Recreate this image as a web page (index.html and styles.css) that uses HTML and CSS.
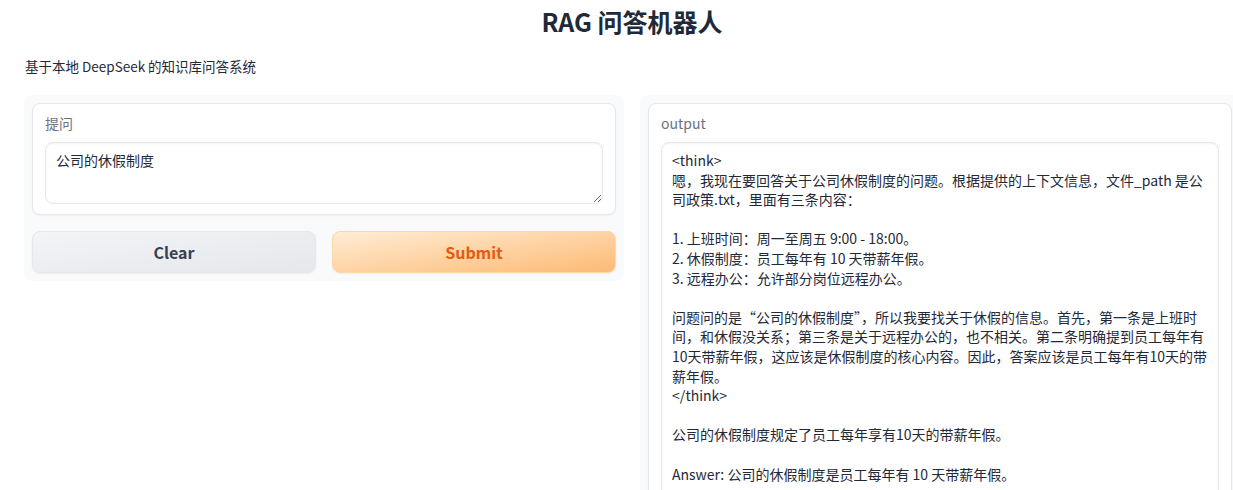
FILE: index.html
```html
<!DOCTYPE html>
<html lang="zh">
<head>
<meta charset="utf-8">
<title>RAG 问答机器人</title>
<link rel="stylesheet" href="styles.css">
</head>
<body>
<div class="app">
  <h1 class="title">RAG 问答机器人</h1>
  <p class="desc">基于本地 DeepSeek 的知识库问答系统</p>
  <div class="row">
    <div class="col panel">
      <div class="block">
        <label class="label" for="q">提问</label>
        <textarea id="q" class="input input-small">公司的休假制度</textarea>
      </div>
      <div class="buttons">
        <button class="btn btn-secondary">Clear</button>
        <button class="btn btn-primary">Submit</button>
      </div>
    </div>
    <div class="col panel">
      <div class="block">
        <label class="label" for="o">output</label>
        <textarea id="o" class="input input-large" readonly>&lt;think&gt;
嗯，我现在要回答关于公司休假制度的问题。根据提供的上下文信息，文件_path 是公司政策.txt，里面有三条内容：

1. 上班时间：周一至周五 9:00 - 18:00。
2. 休假制度：员工每年有 10 天带薪年假。
3. 远程办公：允许部分岗位远程办公。

问题问的是“公司的休假制度”，所以我要找关于休假的信息。首先，第一条是上班时间，和休假没关系；第三条是关于远程办公的，也不相关。第二条明确提到员工每年有10天带薪年假，这应该是休假制度的核心内容。因此，答案应该是员工每年有10天的带薪年假。
&lt;/think&gt;

公司的休假制度规定了员工每年享有10天的带薪年假。

Answer: 公司的休假制度是员工每年有 10 天带薪年假。</textarea>
      </div>
    </div>
  </div>
</div>
</body>
</html>
```

FILE: styles.css
```css
* { box-sizing: border-box; }
html, body { margin: 0; padding: 0; overflow: hidden; background: #ffffff; }
body {
  font-family: "Noto Sans CJK SC", "Noto Sans", sans-serif;
  color: #1f2937;
  font-size: 14px;
}
.app {
  width: 1216px;
  margin-left: 24px;
  padding-top: 4px;
}
.title {
  margin: 0;
  text-align: center;
  font-size: 25px;
  line-height: 34px;
  font-weight: 700;
  color: #1f2937;
}
.desc {
  margin: 18px 0 0 1px;
  font-size: 13.5px;
  line-height: 20px;
  color: #1f2937;
}
.row {
  display: flex;
  gap: 16px;
  margin-top: 19px;
  align-items: flex-start;
}
.col { flex: 1 1 0; min-width: 0; }
.panel {
  background: #f9fafb;
  border-radius: 8px;
  padding: 8px;
}
.block {
  background: #ffffff;
  border: 1px solid #e5e7eb;
  border-radius: 8px;
  padding: 9px 12px 10px;
  box-shadow: 0 1px 2px rgba(0,0,0,0.04);
}
.label {
  display: block;
  font-size: 14px;
  line-height: 20px;
  color: #6b7280;
  margin-bottom: 9px;
}
.input {
  display: block;
  width: 100%;
  font-family: "Noto Sans CJK SC", "Noto Sans", sans-serif;
  font-size: 14px;
  line-height: 19.6px;
  color: #1f2937;
  background: #ffffff;
  border: 1px solid #e5e7eb;
  border-radius: 8px;
  padding: 8px 10px 7px;
  box-shadow: inset 0 1px 2px rgba(0,0,0,0.05);
  outline: none;
}
.input-small { height: 62px; }
.input-large { height: 360px; }
.buttons {
  display: flex;
  gap: 16px;
  margin-top: 16px;
}
.btn {
  flex: 1 1 0;
  height: 42px;
  border-radius: 8px;
  font-family: "Noto Sans CJK SC", "Noto Sans", sans-serif;
  font-size: 16px;
  font-weight: 700;
  cursor: pointer;
}
.btn-secondary {
  background: linear-gradient(to bottom right, #f3f4f6, #e5e7eb);
  border: 1px solid #e5e7eb;
  color: #374151;
  box-shadow: 0 1px 2px rgba(0,0,0,0.05);
}
.btn-primary {
  background: linear-gradient(to bottom right, #ffedd5, #fdba74);
  border: 1px solid #fed7aa;
  color: #ea580c;
  box-shadow: 0 1px 2px rgba(0,0,0,0.05);
}
```
